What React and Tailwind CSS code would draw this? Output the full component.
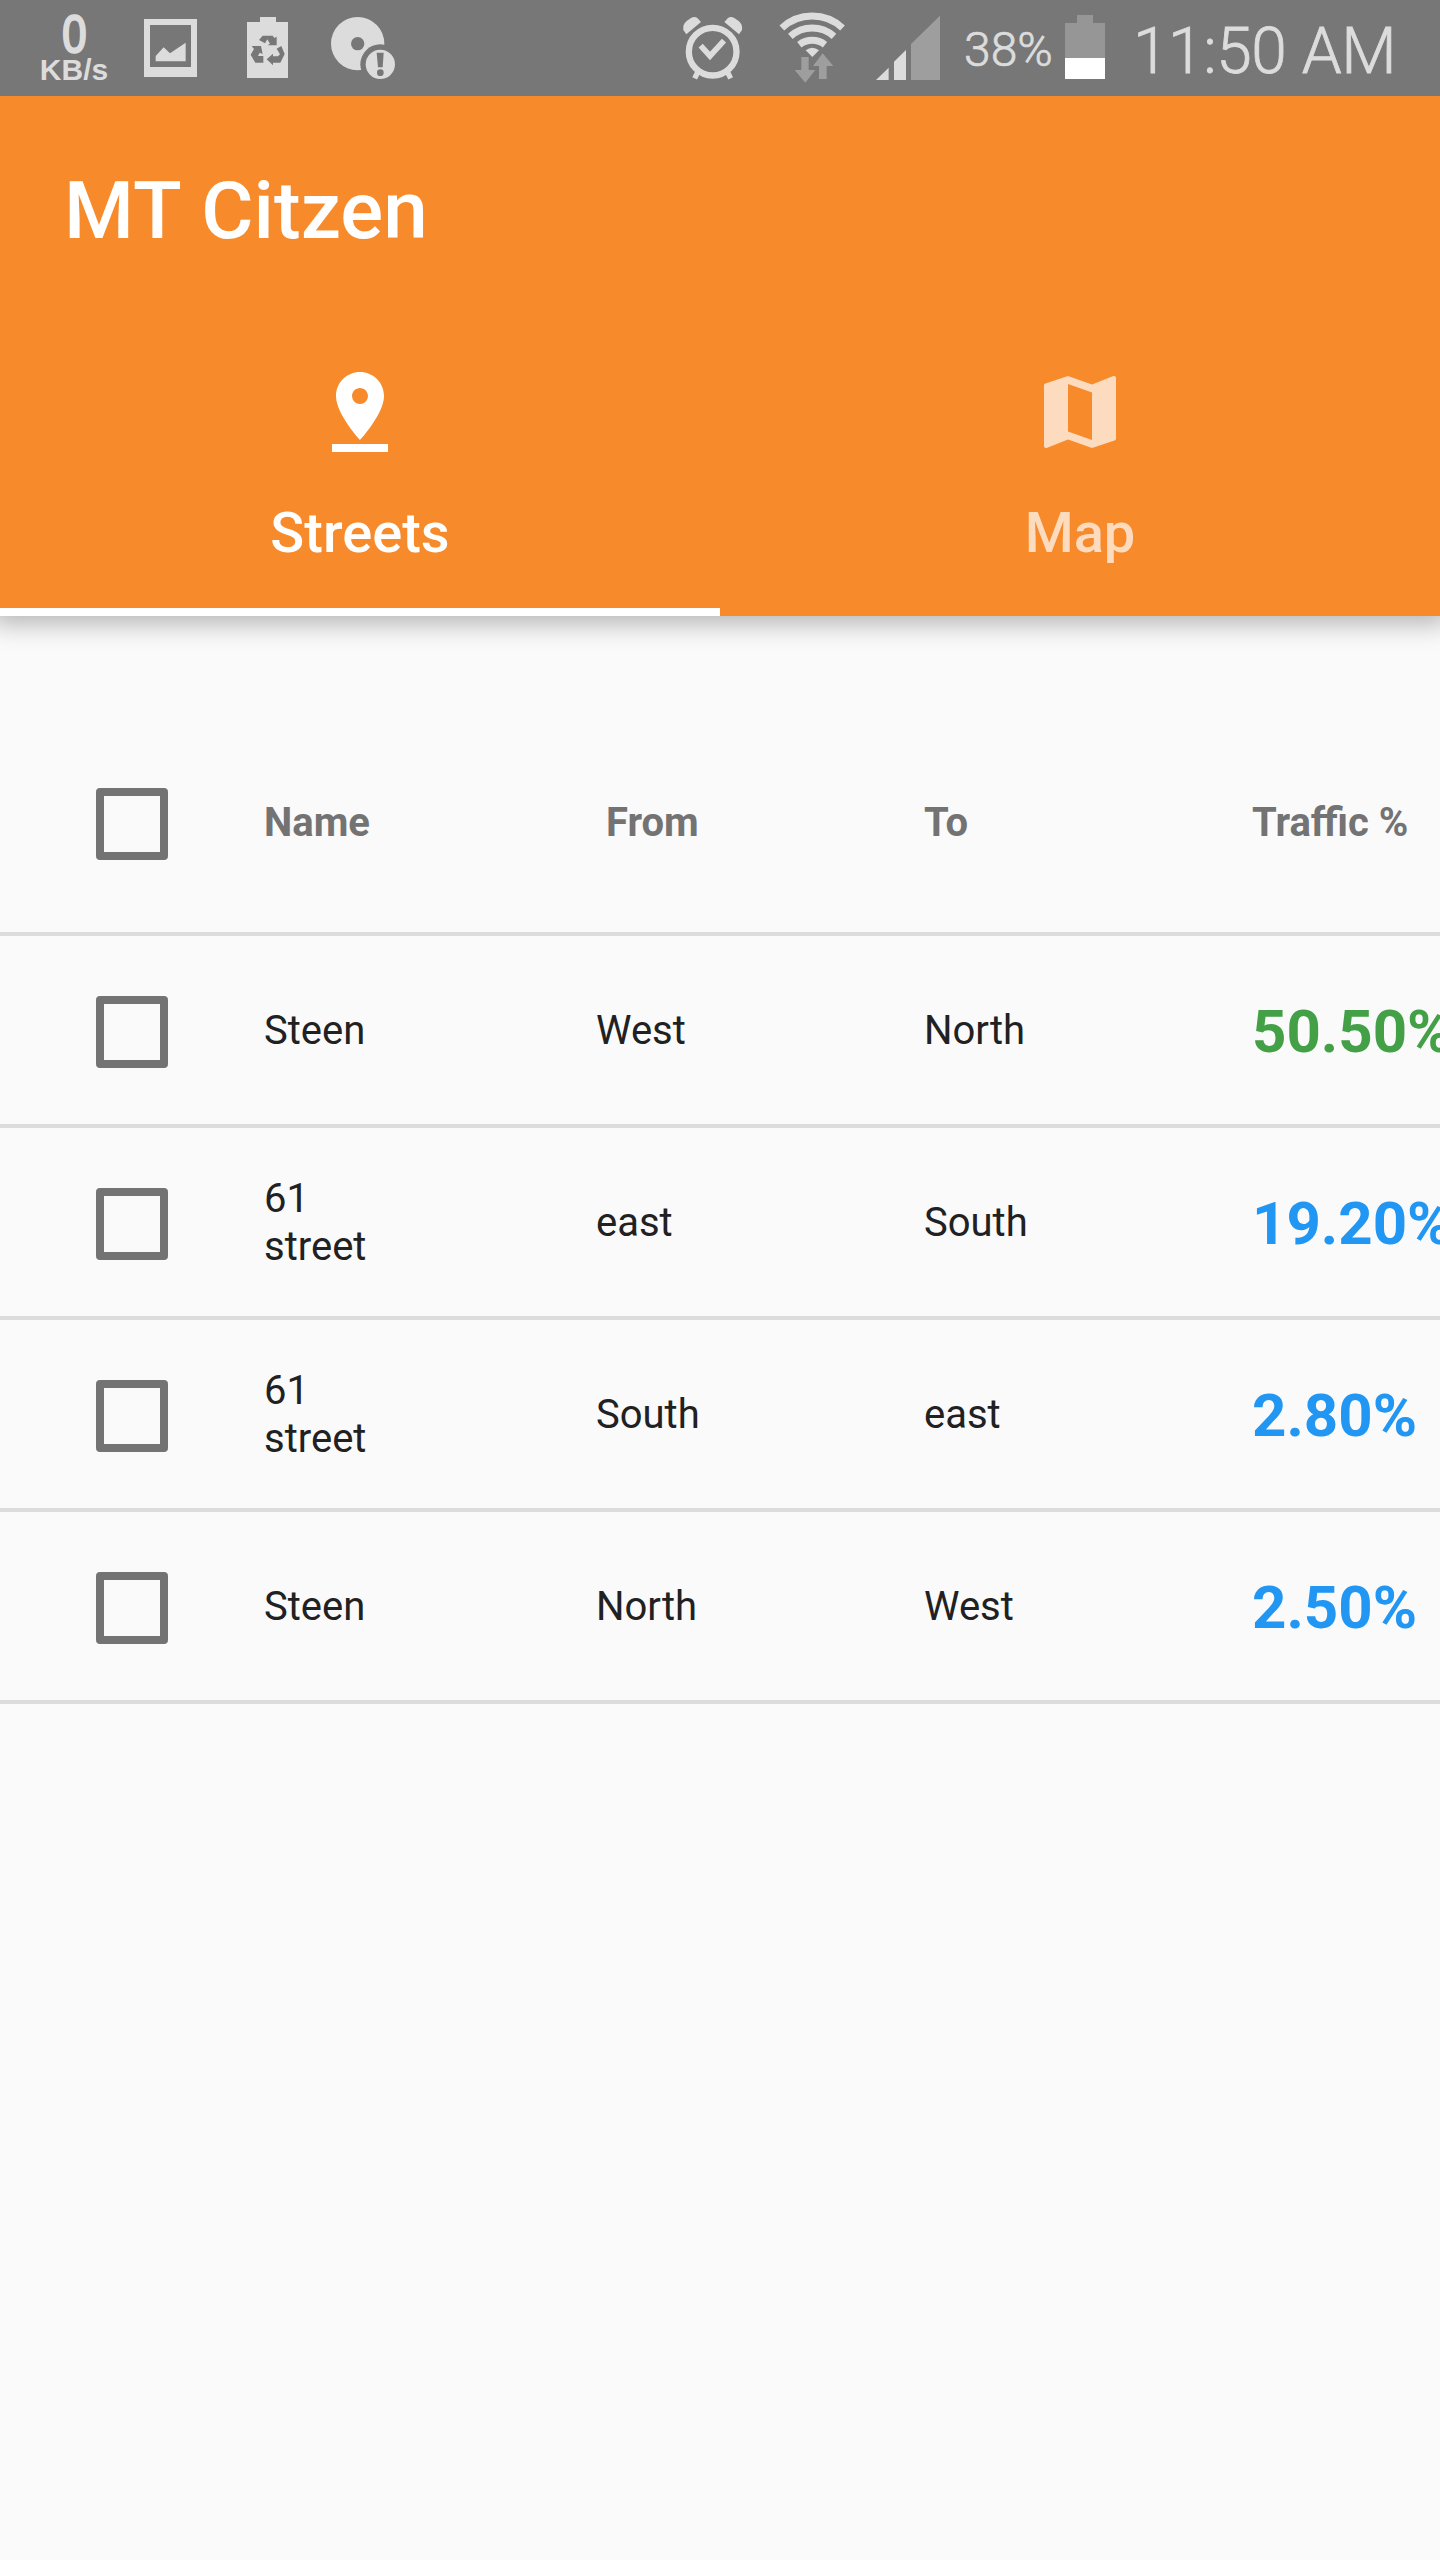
import { MdPinDrop, MdMap } from "react-icons/md";

const LIGHT = "#dcdcdc";
const DIM = "#9e9e9e";

function PictureIcon() {
  return (
    <svg className="ml-[36px] h-24 w-[53px] shrink-0" viewBox="432 0 159 288">
      <path fill={LIGHT} fillRule="evenodd" d="M432 57H591V231H432ZM450 75V201H573V75Z" />
      <path fill={LIGHT} d="M467 184V168L491 142L510 160L557 128V184Z" />
    </svg>
  );
}

function RecycleBatteryIcon() {
  return (
    <svg className="ml-[50px] h-24 w-[41px] shrink-0" viewBox="741 0 123 288">
      <path fill={LIGHT} d="M741 66H780V51H828V66H864V234H741Z" />
      <g fill="#777777">
        <path d="M788 107H818L823 114L830 110V136H803L810 131L802 118L795 130L777 120Z" />
        <path d="M755 138H783L788 162L779 158L774 168H790V188H766L752 164L762 147Z" />
        <path d="M830 146L844 138L854 162L841 188H819V196L800 178L819 161V169H834L840 163Z" />
      </g>
    </svg>
  );
}

function DiscAlertIcon() {
  return (
    <svg className="ml-[43px] h-24 w-[65px] shrink-0" viewBox="993 0 195 288">
      <circle cx="1073" cy="131" r="80" fill={LIGHT} />
      <circle cx="1073" cy="131" r="20" fill="#777777" />
      <circle cx="1141" cy="193" r="60" fill="#777777" />
      <circle cx="1141" cy="193" r="44" fill={LIGHT} />
      <path fill="#777777" d="M1130 158H1151L1148 202H1134Z" />
      <circle cx="1141" cy="218" r="10" fill="#777777" />
    </svg>
  );
}

function AlarmIcon() {
  return (
    <svg className="ml-auto h-24 w-[65px] shrink-0" viewBox="60 0 195 288">
      <g fill="none" stroke={LIGHT}>
        <circle cx="158" cy="155" r="71.5" strokeWidth="19" />
        <path d="M122 137L150 168L192 122" strokeWidth="17" />
        <path d="M115 213L104 235M201 213L212 235" strokeWidth="16" />
      </g>
      <path fill={LIGHT} d="M79 103L70 90Q67 74 80 63L93 54Q104 48 112 54L123 66Z" />
      <path fill={LIGHT} d="M237 103L246 90Q249 74 236 63L223 54Q212 48 204 54L193 66Z" />
    </svg>
  );
}

function WifiIcon() {
  return (
    <svg className="ml-[31px] h-24 w-[70px] shrink-0" viewBox="348 0 210 288">
      <g fill="none" stroke={LIGHT} strokeWidth="21">
        <path d="M365.5 84A134 134 0 0 1 547.5 84" />
        <path d="M391 109A98.500 98.500 0 0 1 522 109" />
        <path d="M418 134A63 63 0 0 1 495 134" />
      </g>
      <path fill={LIGHT} d="M437 151Q457 136 477 151L457 171Z" />
      <path fill={DIM} d="M424 171H446V210H466L436 248L404 210H424Z" />
      <path fill={DIM} d="M488 160L520 198H500V237H477V198H459Z" />
    </svg>
  );
}

function SignalIcon() {
  return (
    <svg className="ml-[29px] h-24 w-[66px] shrink-0" viewBox="645 0 198 288">
      <path fill={LIGHT} d="M648 240L686 203V240ZM702 240V185L738 150V240Z" />
      <path fill={DIM} d="M753 240V132L840 47V240Z" />
    </svg>
  );
}

function BatteryIcon() {
  return (
    <svg className="h-24 w-10 shrink-0" viewBox="75 0 120 288">
      <path fill="#969696" d="M75 69H111V45H159V69H195V174H75Z" />
      <path fill="#ffffff" d="M75 174H195V237H75Z" />
    </svg>
  );
}

function StatusBar() {
  return (
    <div className="flex h-24 items-center bg-[#777777] pl-[40px] text-[#dcdcdc]">
      <div className="flex w-[68px] shrink-0 flex-col items-center font-['Liberation_Sans',sans-serif] font-bold">
        <span className="scale-x-[0.84] text-[52px] leading-[44px] font-normal [-webkit-text-stroke:2.4px_#dcdcdc]">0</span>
        <span className="text-[30px] leading-[28px]">KB/s</span>
      </div>
      <PictureIcon />
      <RecycleBatteryIcon />
      <DiscAlertIcon />
      <AlarmIcon />
      <WifiIcon />
      <SignalIcon />
      <span className="ml-[23px] w-[101px] shrink-0 pt-[3px] text-[48px] leading-[56px] font-light whitespace-nowrap [-webkit-text-stroke:0.7px_#dcdcdc]">38%</span>
      <BatteryIcon />
      <span className="ml-[28px] w-[307px] shrink-0 pt-[6px] text-[64px] leading-[75px] font-light tracking-[-0.4px] whitespace-nowrap [-webkit-text-stroke:0.8px_#dcdcdc]">11:50 AM</span>
    </div>
  );
}

function Tab({ icon: Icon, label, active }) {
  return (
    <div
      className={
        active
          ? "flex h-full flex-1 flex-col items-center border-b-8 border-white pt-11 text-white"
          : "flex h-full flex-1 flex-col items-center pt-11 text-[#fddbbf]"
      }
    >
      <Icon className="size-24" />
      <span className="mt-[40px] text-[56px] leading-[66px] font-medium">{label}</span>
    </div>
  );
}

function Checkbox() {
  return <span className="block size-[72px] rounded-[4px] border-8 border-[#737373]" />;
}

const columns = "grid grid-cols-[96px_168px_332px_328px_328px_1fr] items-center border-b-4 border-[#dcdcdc]";

const rows = [
  { name: "Steen", from: "West", to: "North", traffic: "50.50%", tone: "text-[#43a047]" },
  { name: "61 street", from: "east", to: "South", traffic: "19.20%", tone: "text-[#2196f3]" },
  { name: "61 street", from: "South", to: "east", traffic: "2.80%", tone: "text-[#2196f3]" },
  { name: "Steen", from: "North", to: "West", traffic: "2.50%", tone: "text-[#2196f3]" },
];

export default function App() {
  return (
    <div className="h-[2560px] w-[1440px] overflow-hidden bg-[#fafafa] font-['Roboto',sans-serif]">
      <StatusBar />
      <header className="relative bg-[#f78a2a] shadow-[0_0_24px_8px_rgba(0,0,0,0.28)] [clip-path:inset(0_0_-60px_0)]">
        <div className="flex h-56 items-center pt-1.5 pl-16">
          <h1 className="text-[80px] leading-[94px] font-medium tracking-[0.05px] text-white [word-spacing:1.5px]">MT Citzen</h1>
        </div>
        <nav className="flex h-[296px]">
          <Tab icon={MdPinDrop} label="Streets" active />
          <Tab icon={MdMap} label="Map" />
        </nav>
      </header>
      <main className="pt-24 text-[40px] leading-[48px]">
        <div className={`${columns} h-56 font-bold text-[#737373]`}>
          <span />
          <div className="pt-1"><Checkbox /></div>
          <span className="pt-0.5">Name</span>
          <span className="pt-0.5 pl-[10px]">From</span>
          <span className="pt-0.5">To</span>
          <span className="pt-0.5 whitespace-nowrap">Traffic %</span>
        </div>
        {rows.map((row, i) => (
          <div key={i} className={`${columns} h-48 text-[#212121]`}>
            <span />
            <div className="pt-1"><Checkbox /></div>
            <span className="w-[120px] pt-0.5">{row.name}</span>
            <span className="pt-0.5">{row.from}</span>
            <span className="pt-0.5">{row.to}</span>
            <span className={`pt-1 text-[60px] leading-[70px] font-bold whitespace-nowrap ${row.tone}`}>{row.traffic}</span>
          </div>
        ))}
      </main>
    </div>
  );
}
